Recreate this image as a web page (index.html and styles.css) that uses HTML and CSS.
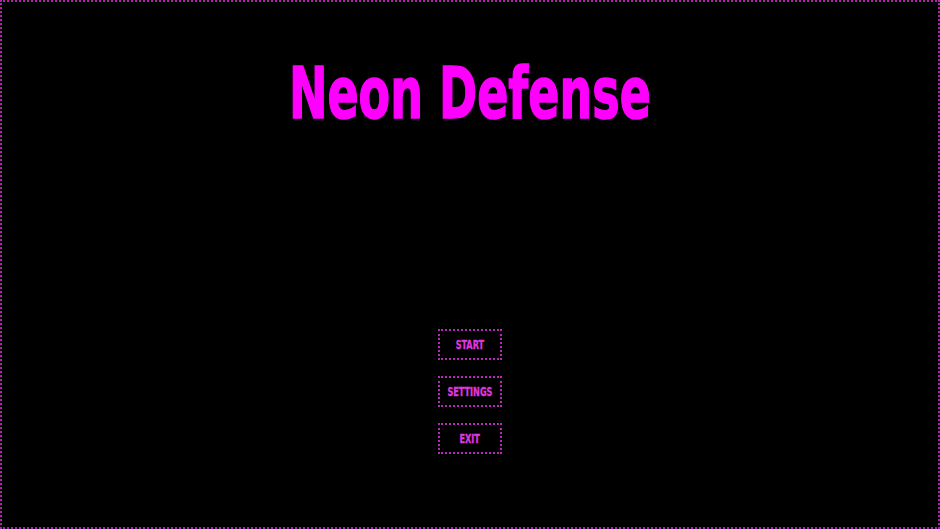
FILE: index.html
```html
<!DOCTYPE html>
<html>
<head>
<meta charset="utf-8">
<link rel="stylesheet" href="styles.css">
</head>
<body>
<div class="screen">
  <h1 class="title"><span class="title-text">Neon Defense</span></h1>
  <div class="menu">
    <button class="btn"><span class="btn-text">START</span></button>
    <button class="btn"><span class="btn-text">SETTINGS</span></button>
    <button class="btn"><span class="btn-text">EXIT</span></button>
  </div>
</div>
</body>
</html>
```
FILE: styles.css
```css
html, body {
  margin: 0;
  padding: 0;
  background: #000;
}
.screen {
  box-sizing: border-box;
  width: 940px;
  height: 529px;
  border: 2px dotted #b020b0;
  background: #000;
  display: flex;
  flex-direction: column;
  align-items: center;
}
.title {
  margin: 49px 0 0 0;
  font-family: "DejaVu Sans", sans-serif;
  font-stretch: condensed;
  font-weight: bold;
  font-size: 72px;
  line-height: 84px;
  color: #ff00ff;
  white-space: nowrap;
  -webkit-text-stroke: 1.5px #ff00ff;
}
.title-text {
  display: inline-block;
  transform: scaleX(0.71);
}
.menu {
  margin-top: 194px;
  display: flex;
  flex-direction: column;
  align-items: center;
  gap: 16px;
}
.btn {
  box-sizing: border-box;
  width: 64px;
  height: 31px;
  background: #000;
  border: 2px dotted #b828b8;
  color: #e038e0;
  font-family: "DejaVu Sans", sans-serif;
  font-stretch: condensed;
  font-weight: bold;
  font-size: 12px;
  padding: 0;
  white-space: nowrap;
  -webkit-text-stroke: 0.3px #e038e0;
}
.btn-text {
  display: inline-block;
  transform: scaleX(0.75);
}
```
